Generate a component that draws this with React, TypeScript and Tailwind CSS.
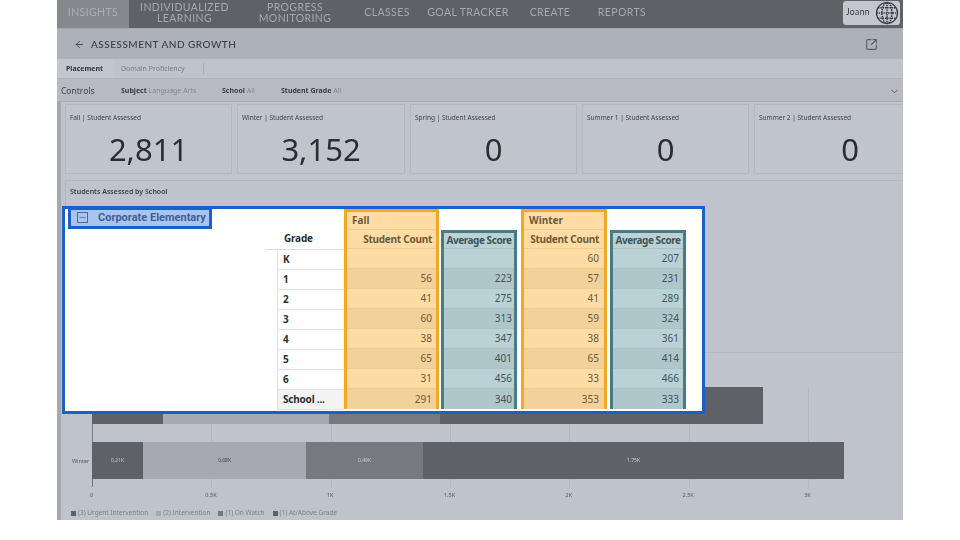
import { ArrowLeft, ChevronDown, Minus, SquareArrowOutUpRight } from "lucide-react";

const navItems = [
  { lines: ["INDIVIDUALIZED", "LEARNING"], width: "w-[111px]" },
  { lines: ["PROGRESS", "MONITORING"], width: "w-[110px]" },
  { lines: ["CLASSES"], width: "w-[74px]" },
  { lines: ["GOAL TRACKER"], width: "w-[88px]" },
  { lines: ["CREATE"], width: "w-[76px]" },
  { lines: ["REPORTS"], width: "w-[68px]" },
];

const cards = [
  { label: "Fall | Student Assessed", value: "2,811", width: "w-[167px]" },
  { label: "Winter | Student Assessed", value: "3,152", width: "w-[168px]" },
  { label: "Spring | Student Assessed", value: "0", width: "w-[167px]" },
  { label: "Summer 1 | Student Assessed", value: "0", width: "w-[167px]" },
  { label: "Summer 2 | Student Assessed", value: "0", width: "w-[192px]" },
];

const filters = [
  { name: "Subject", value: "Language Arts", width: "w-[101px]" },
  { name: "School", value: "All", width: "w-[59px]" },
  { name: "Student Grade", value: "All", width: "w-[80px]" },
];

const grades = ["K", "1", "2", "3", "4", "5", "6", "School ..."];
const fallCount = ["", "56", "41", "60", "38", "65", "31", "291"];
const fallScore = ["", "223", "275", "313", "347", "401", "456", "340"];
const winterCount = ["60", "57", "41", "59", "38", "65", "33", "353"];
const winterScore = ["207", "231", "289", "324", "361", "414", "466", "333"];

const ticks = ["0", "0.5K", "1K", "1.5K", "2K", "2.5K", "3K"];
const legend = [
  { label: "(3) Urgent Intervention", color: "bg-[#5f6166]" },
  { label: "(2) Intervention", color: "bg-[#a6a9af]" },
  { label: "(1) On Watch", color: "bg-[#76797d]" },
  { label: "(1) At/Above Grade", color: "bg-[#5f6166]" },
];

const Globe = () => (
  <svg width="24" height="24" viewBox="0 0 24 24" fill="none" stroke="#34363a" strokeWidth="1.6" strokeDasharray="1.4 0.9">
    <circle cx="12" cy="12" r="10.5" strokeDasharray="none" strokeWidth="1.2" />
    <ellipse cx="12" cy="12" rx="5" ry="10.5" />
    <path d="M12 1.5v21M1.5 12h21M3 6.8h18M3 17.2h18" />
  </svg>
);

const OrangeColumn = ({ title, values, width, pad }: { title: string; values: string[]; width: string; pad: string }) => (
  <div className={`${width} h-[200px] border-[3px] border-[#f5a623] bg-[#fedca4] text-[#6d5a3a] text-[10px] shrink-0`}>
    <div className="h-[18px] flex items-center pl-[5px] border-b border-[#efcf99] font-bold">{title}</div>
    <div className={`h-[19px] pt-[1px] flex items-center justify-end ${pad} border-b border-[#efcf99] font-bold whitespace-nowrap tracking-[-0.25px]`}>Student Count</div>
    {values.map((v, i) => (
      <div
        key={i}
        className={`h-[20px] flex items-center justify-end ${pad} border-b border-[#eccb95] last:border-b-0 ${
          i % 2 === 1 || i === 7 ? "bg-[#f2d19b]" : ""
        }`}
      >
        {v}
      </div>
    ))}
  </div>
);

const TealColumn = ({ values, width, pad }: { values: string[]; width: string; pad: string }) => (
  <div className={`${width} h-[179px] mt-[21px] border-[3px] border-[#487c80] bg-[#bad2d6] text-[#3e5558] text-[10px] shrink-0`}>
    <div className="h-[16px] flex items-center justify-center border-b border-[#a9c2c6] font-bold whitespace-nowrap tracking-[-0.45px]">Average Score</div>
    {values.map((v, i) => (
      <div
        key={i}
        className={`h-[20px] flex items-center justify-end ${pad} border-b border-[#a9c2c6] last:border-b-0 ${
          i % 2 === 1 || i === 7 ? "bg-[#afc6ca]" : ""
        }`}
      >
        {v}
      </div>
    ))}
  </div>
);

const Overlay = () => (
  <div className="absolute left-[5px] top-[206px] w-[643px] h-[208px] border-[3px] border-[#1a5fcb] bg-white flex font-['Noto_Sans',sans-serif]">
    <div className="w-[212px] shrink-0">
      <div className="ml-[3px] -mt-[2px] w-[144px] h-[22px] pb-[2px] border-[3px] border-[#1a5fcb] bg-[#a9c5ef] flex items-center pl-[6px] gap-[10px] font-['Roboto',sans-serif]">
        <div className="w-[11px] h-[11px] border border-[#4d6a99] flex items-center justify-center">
          <Minus size={9} color="#4d6a99" strokeWidth={2} />
        </div>
        <span className="text-[11px] font-bold text-[#3f5f96] leading-none whitespace-nowrap">Corporate Elementary</span>
      </div>
    </div>
    <div className="w-[67px] shrink-0 pt-[1px] text-[10px] font-bold text-[#2c2f33] tracking-[-0.2px]">
      <div className="h-[40px] pt-[18px] flex items-center border-b border-[#dcdcdc] -ml-[12px]">
        <span className="ml-[19px]">Grade</span>
      </div>
      {grades.map((g, i) => (
        <div
          key={g}
          className={`h-[20px] flex items-center pl-[5px] border-l border-b border-[#e2e2e2] ${i === 7 ? "bg-[#f3f3f3]" : ""}`}
        >
          {g}
        </div>
      ))}
    </div>
    <OrangeColumn title="Fall" values={fallCount} width="w-[95px]" pad="pr-[4px]" />
    <div className="w-[2px] shrink-0" />
    <TealColumn values={fallScore} width="w-[76px]" pad="pr-[2px]" />
    <div className="w-[4px] shrink-0" />
    <OrangeColumn title="Winter" values={winterCount} width="w-[86px]" pad="pr-[5px]" />
    <div className="w-[3px] shrink-0" />
    <TealColumn values={winterScore} width="w-[76px]" pad="pr-[4px]" />
  </div>
);

const Bar = ({ segments }: { segments: { width: string; color: string; label?: string; text?: string }[] }) => (
  <div className="flex h-[37px]">
    {segments.map((s, i) => (
      <div key={i} className={`${s.width} ${s.color} ${s.text ?? "text-[#c9ccd2]"} flex items-center justify-center text-[5px]`}>
        {s.label}
      </div>
    ))}
  </div>
);

const App = () => {
  return (
    <div className="w-[960px] h-[540px] bg-white overflow-hidden">
      <div className="relative ml-[57px] w-[846px] h-[520px]">
        <div className="w-full h-full overflow-hidden bg-[#bfc3cc] flex flex-col blur-[0.5px] font-['Noto_Sans',sans-serif]">
          {/* top nav */}
          <div className="h-[28px] shrink-0 bg-[#5f6166] flex items-center text-[#a6a9ad] text-[10.5px] leading-[11px] font-['Lato',sans-serif] tracking-[0.4px]">
            <div className="w-[72px] h-full pb-[3px] bg-[#85888d] flex items-center justify-center text-[#abaeb2]">INSIGHTS</div>
            {navItems.map((item) => (
              <div key={item.lines[0]} className={`${item.width} text-center -mt-[3px]`}>
                {item.lines.map((line) => (
                  <div key={line}>{line}</div>
                ))}
              </div>
            ))}
            <div className="ml-auto mr-[3px] w-[57px] h-[24px] -mt-[3px] rounded-[3px] bg-[#c3c6ce] flex items-center justify-between pl-[3px] pr-[1px] text-[8.5px] text-[#33353a]">
              <span>Joann</span>
              <Globe />
            </div>
          </div>

          {/* page header */}
          <div className="h-[31px] shrink-0 bg-[#adb1b9] flex items-center pl-[17px] pr-[25px] pt-[1px] text-[#3a3c41] border-t border-[#a3a6ad]">
            <ArrowLeft size={11} strokeWidth={1.8} />
            <span className="ml-[6px] text-[10px] font-['Lato',sans-serif] font-medium tracking-[0.5px]">ASSESSMENT AND GROWTH</span>
            <SquareArrowOutUpRight size={13} className="ml-auto text-[#5c5f65]" />
          </div>

          {/* tabs */}
          <div className="h-[20px] shrink-0 flex items-center text-[7px] border-b border-[#b2b5bc]">
            <div className="w-[57px] h-full bg-[#c2c6ce] flex items-center pl-[9px] pt-[1px] font-bold text-[#34363a]">Placement</div>
            <div className="w-[90px] pl-[7px] pt-[1px] text-[#777a80] border-r border-[#aaadb4]">Domain Proficiency</div>
          </div>

          {/* controls */}
          <div className="h-[23px] shrink-0 bg-[#b7bac2] flex items-center pl-[4px] pr-[3px] pt-[2px] border-b border-[#a9acb3]">
            <span className="w-[60px] text-[8.5px] text-[#44464b]">Controls</span>
            {filters.map((f) => (
              <div key={f.name} className={`${f.width} text-[7px] whitespace-nowrap`}>
                <span className="font-bold text-[#3a3c41]">{f.name}</span>{" "}
                <span className="text-[#85888e]">{f.value}</span>
              </div>
            ))}
            <ChevronDown size={11} className="ml-auto text-[#55585d]" />
          </div>

          <div className="flex-1 border-l-[4px] border-[#a5a8ae] pt-[2px] flex flex-col min-h-0">
            {/* summary cards */}
            <div className="h-[70px] shrink-0 flex gap-[5px] pl-[4px]">
              {cards.map((card) => (
                <div key={card.label} className={`${card.width} shrink-0 border border-[#b3b7bf] bg-[#c0c4cd] px-[4px] pt-[8px]`}>
                  <div className="text-[6.5px] text-[#414347] whitespace-nowrap">{card.label}</div>
                  <div className="mt-[6px] text-center text-[31px] leading-[40px] text-[#2b2d31]">{card.value}</div>
                </div>
              ))}
            </div>

            {/* students by school */}
            <div className="mt-[6px] ml-[4px] h-[170px] shrink-0 border-t border-l border-[#b3b7bf] pl-[4px] pt-[6px]">
              <div className="text-[7px] font-semibold text-[#3e4045]">Students Assessed by School</div>
            </div>

            {/* chart */}
            <div className="mt-[2px] flex-1 ml-[1px] border-t border-[#b3b7bf] relative pl-[30px] pt-[34px]">
              {[0, 1, 2, 3, 4, 5, 6].map((t) => (
                <div
                  key={t}
                  className={`absolute top-[34px] bottom-[33px] w-px ${t === 0 ? "bg-[#76797f]" : "bg-[#b3b7bf]"}`}
                  style={{ left: 30 + t * 119.3 }}
                />
              ))}
              <div className="relative flex flex-col gap-[18px]">
                <Bar
                  segments={[
                    { width: "w-[71px]", color: "bg-[#5f6166]" },
                    { width: "w-[166px]", color: "bg-[#a6a9af]" },
                    { width: "w-[111px]", color: "bg-[#76797d]" },
                    { width: "w-[323px]", color: "bg-[#5f6166]" },
                  ]}
                />
                <Bar
                  segments={[
                    { width: "w-[51px]", color: "bg-[#5f6166]", label: "0.21K" },
                    { width: "w-[163px]", color: "bg-[#a6a9af]", label: "0.68K", text: "text-[#3e4045]" },
                    { width: "w-[117px]", color: "bg-[#76797d]", label: "0.49K" },
                    { width: "w-[421px]", color: "bg-[#5f6166]", label: "1.75K" },
                  ]}
                />
                <span className="absolute left-[-20px] top-[70px] text-[5.5px] text-[#55585d]">Winter</span>
              </div>
              <div className="mt-[12px] -ml-[60px] flex">
                {ticks.map((t) => (
                  <div key={t} className="w-[119.3px] shrink-0 text-center text-[5.5px] text-[#55585d]">{t}</div>
                ))}
              </div>
              <div className="absolute left-[9px] bottom-[2px] flex gap-[8px] text-[6.5px] text-[#7d8086]">
                {legend.map((l) => (
                  <div key={l.label} className="flex items-center gap-[2px]">
                    <span className={`w-[5px] h-[5px] ${l.color}`} />
                    <span>{l.label}</span>
                  </div>
                ))}
              </div>
            </div>
          </div>
        </div>
        <Overlay />
      </div>
    </div>
  );
};

export default App;
